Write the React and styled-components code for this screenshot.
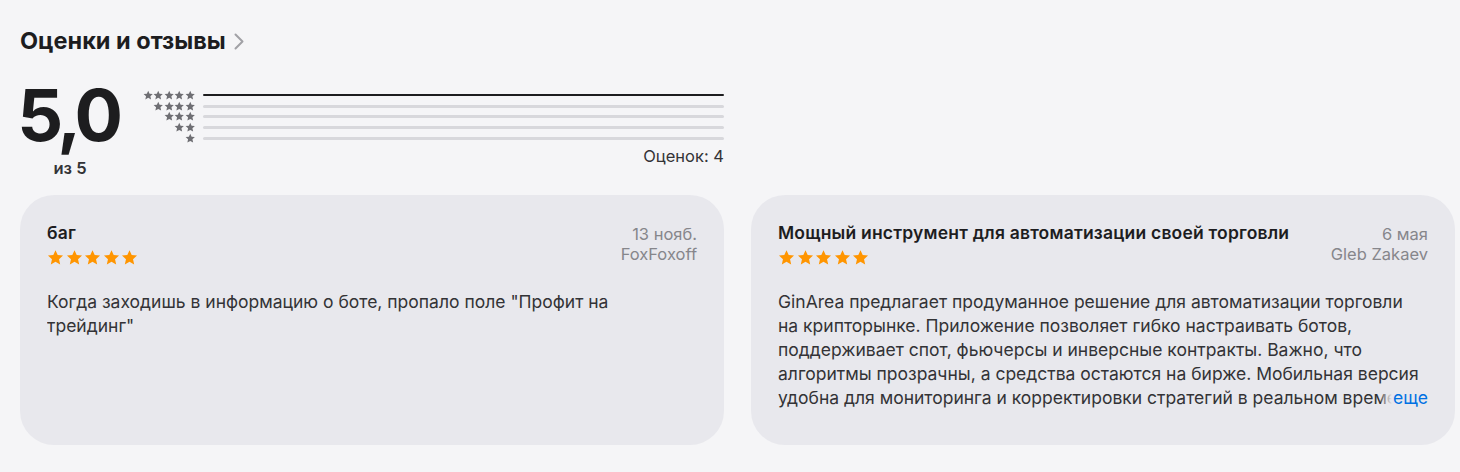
import React from "react";
import styled, { createGlobalStyle } from "styled-components";

const Global = createGlobalStyle`
  html, body {
    margin: 0;
    padding: 0;
    background: #f5f5f7;
  }
  body {
    font-family: Inter, "Liberation Sans", sans-serif;
    color: #1d1d1f;
    -webkit-font-smoothing: antialiased;
  }
`;

const Page = styled.div`
  width: 1460px;
  height: 472px;
  padding: 26px 0 0 20px;
  box-sizing: border-box;
  overflow: hidden;
`;

const Heading = styled.a`
  display: flex;
  width: fit-content;
  align-items: center;
  gap: 8px;
  font-size: 23.5px;
  font-weight: 700;
  color: #1d1d1f;
  text-decoration: none;
  line-height: 30px;
`;

const Summary = styled.div`
  display: flex;
  width: 704px;
  margin-top: 22px;
  gap: 23px;
`;

const Score = styled.div`
  display: flex;
  flex-direction: column;
  align-items: center;
  width: 100px;
`;

const Big = styled.div`
  font-size: 72px;
  font-weight: 700;
  letter-spacing: -4.5px;
  line-height: 74px;
  color: #1d1d1f;
  margin-left: -4px;
`;

const OutOf = styled.div`
  font-size: 16.5px;
  font-weight: 600;
  line-height: 20px;
  color: #333336;
  margin-top: 6px;
`;

const Histogram = styled.div`
  flex: 1;
  display: flex;
  flex-direction: column;
  padding-top: 12px;
`;

const HistRow = styled.div`
  display: flex;
  align-items: center;
  height: 10.7px;
  gap: 8px;
`;

const StarGroup = styled.div`
  width: 52px;
  display: flex;
  justify-content: flex-end;
  color: #6e6e73;
`;

const Bar = styled.div`
  flex: 1;
  height: ${(p) => (p.$full ? 2 : 3)}px;
  background: ${(p) => (p.$full ? "#1d1d1f" : "#d8d8dc")};
  border-radius: 2px;
`;

const Count = styled.div`
  align-self: flex-end;
  font-size: 16.5px;
  line-height: 20px;
  color: #333336;
  margin-top: 3px;
`;

const Cards = styled.div`
  display: grid;
  grid-template-columns: 704px 704px;
  gap: 27px;
  margin-top: 17px;
`;

const Card = styled.div`
  height: 250px;
  box-sizing: border-box;
  background: #e8e8ed;
  border-radius: 34px;
  padding: 27px 27px 0 27px;
`;

const CardHead = styled.div`
  display: flex;
  justify-content: space-between;
  align-items: flex-start;
`;

const Title = styled.div`
  font-size: 17.5px;
  font-weight: 600;
  letter-spacing: 0.2px;
  line-height: 22px;
  color: #1d1d1f;
`;

const Stars = styled.div`
  display: flex;
  gap: 1.5px;
  margin-top: 4.5px;
  color: #ff9500;
`;

const Meta = styled.div`
  text-align: right;
  font-size: 16.5px;
  line-height: 20px;
  color: #86868b;
  margin-top: 2px;
`;

const Body = styled.div`
  position: relative;
  margin-top: 24.5px;
  font-size: 17.5px;
  line-height: 24px;
  color: #333336;
  white-space: nowrap;
  max-height: 120px;
  overflow: hidden;
`;

const More = styled.a`
  position: absolute;
  right: 0;
  bottom: 0;
  padding-left: 12px;
  background: linear-gradient(to right, rgba(232, 232, 237, 0.2), #e8e8ed 11px);
  color: #0071e3;
  text-decoration: none;
  line-height: 24px;
`;

function Star({ size, color }) {
  return (
    <svg width={size} height={size} viewBox="0 0 24 24" fill={color || "currentColor"}>
      <path d="M12 1.6l3.1 6.9 7.5.8-5.6 5.1 1.6 7.4L12 18l-6.6 3.8 1.6-7.4-5.6-5.1 7.5-.8z" />
    </svg>
  );
}

function Chevron() {
  return (
    <svg width="10" height="17" viewBox="0 0 10 17" fill="none">
      <path d="M1.5 1.5l7 7-7 7" stroke="#a1a1a6" strokeWidth="2" strokeLinecap="round" strokeLinejoin="round" />
    </svg>
  );
}

const rows = [5, 4, 3, 2, 1];

function Review({ title, date, author, children, more }) {
  return (
    <Card>
      <CardHead>
        <div>
          <Title>{title}</Title>
          <Stars>
            {[0, 1, 2, 3, 4].map((i) => (
              <Star key={i} size={17} />
            ))}
          </Stars>
        </div>
        <Meta>
          <div>{date}</div>
          <div>{author}</div>
        </Meta>
      </CardHead>
      <Body>
        {children}
        {more && <More href="#">еще</More>}
      </Body>
    </Card>
  );
}

export default function App() {
  return (
    <Page>
      <Global />
      <Heading href="#">
        Оценки и отзывы <Chevron />
      </Heading>
      <Summary>
        <Score>
          <Big>5,0</Big>
          <OutOf>из 5</OutOf>
        </Score>
        <Histogram>
          {rows.map((n) => (
            <HistRow key={n}>
              <StarGroup>
                {Array.from({ length: n }).map((_, i) => (
                  <Star key={i} size={10.5} />
                ))}
              </StarGroup>
              <Bar $full={n === 5} />
            </HistRow>
          ))}
          <Count>Оценок: 4</Count>
        </Histogram>
      </Summary>
      <Cards>
        <Review title="баг" date="13 нояб." author="FoxFoxoff">
          Когда заходишь в информацию о боте, пропало поле "Профит на
          <br />
          трейдинг"
        </Review>
        <Review
          title="Мощный инструмент для автоматизации своей торговли"
          date="6 мая"
          author="Gleb Zakaev"
          more
        >
          GinArea предлагает продуманное решение для автоматизации торговли
          <br />
          на крипторынке. Приложение позволяет гибко настраивать ботов,
          <br />
          поддерживает спот, фьючерсы и инверсные контракты. Важно, что
          <br />
          алгоритмы прозрачны, а средства остаются на бирже. Мобильная версия
          <br />
          удобна для мониторинга и корректировки стратегий в реальном времени.
        </Review>
      </Cards>
    </Page>
  );
}
